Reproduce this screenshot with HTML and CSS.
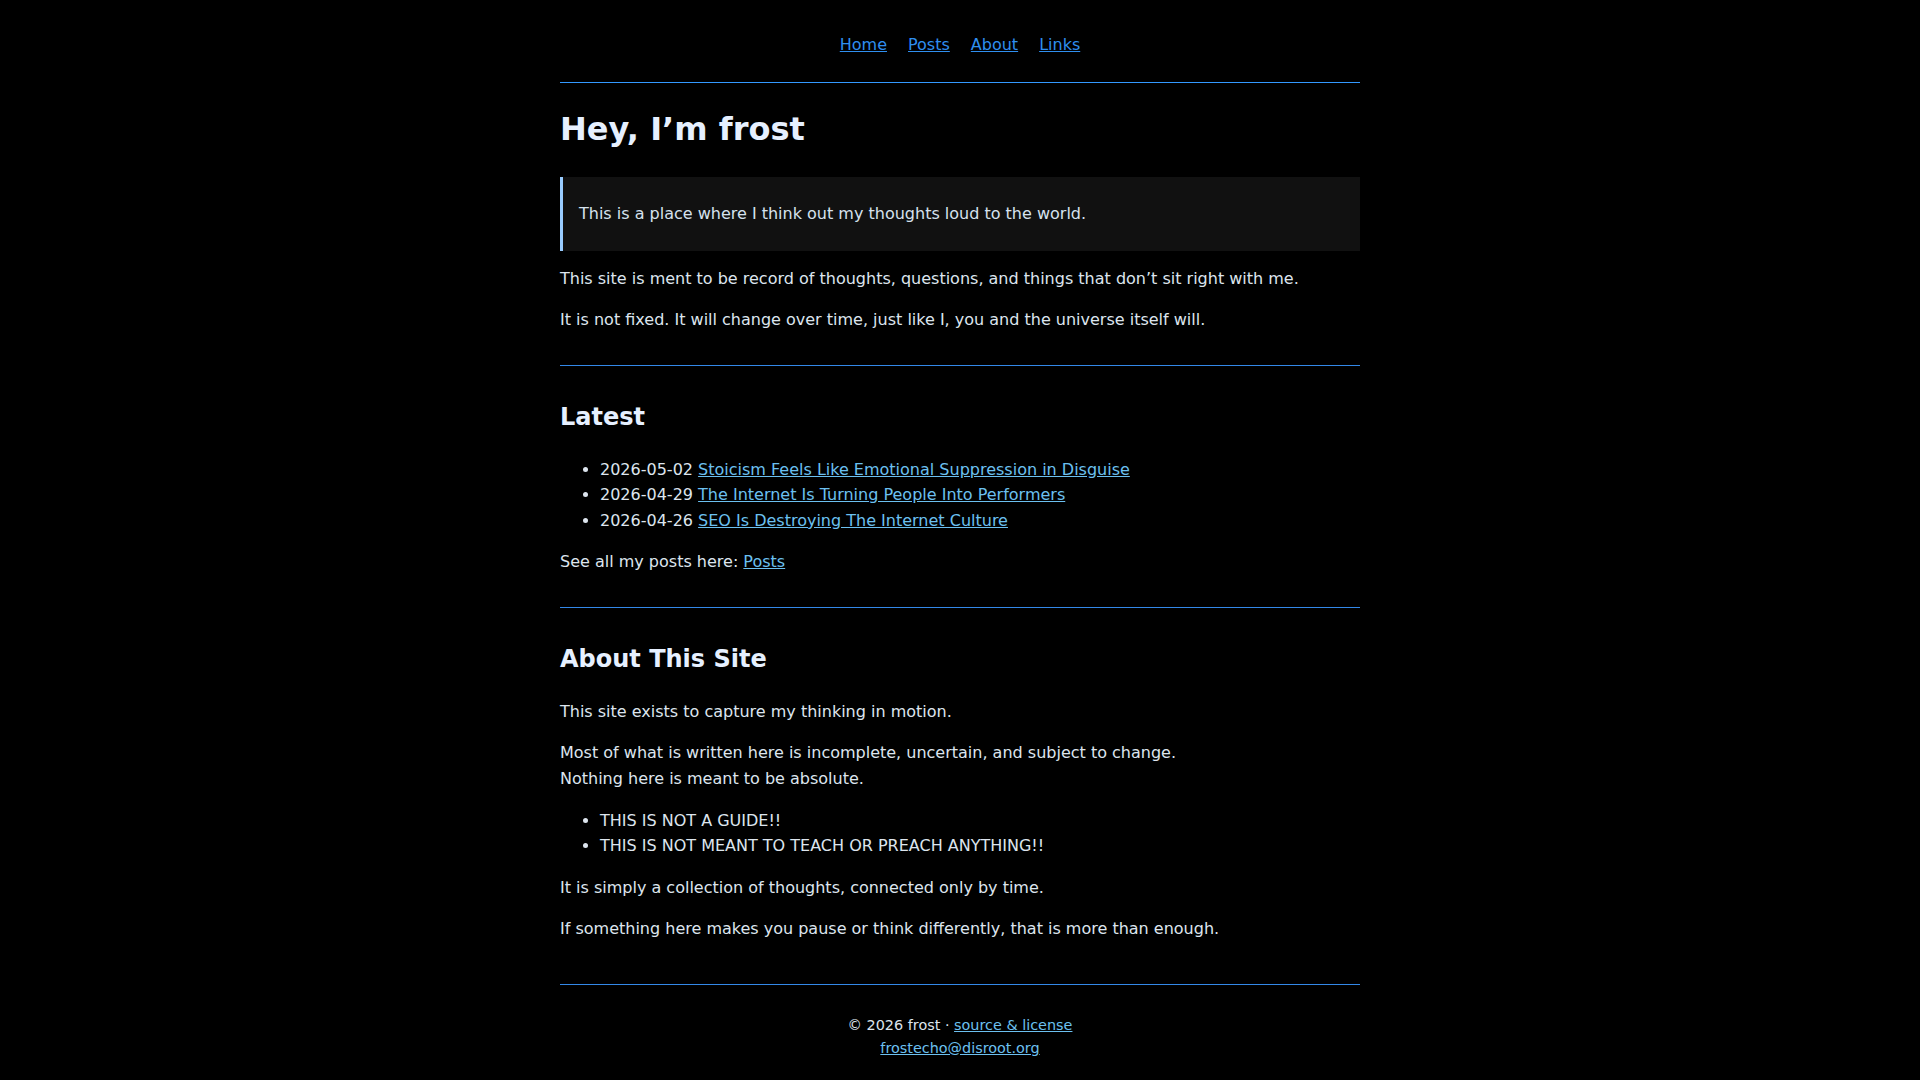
FILE: index.html
```html
<!DOCTYPE html>
<html lang="en">
<head>
<meta charset="utf-8">
<title>frost</title>
<link rel="stylesheet" href="styles.css">
</head>
<body>
<div class="page">
  <header class="site-header">
    <nav class="nav">
      <a href="#">Home</a>
      <a href="#">Posts</a>
      <a href="#">About</a>
      <a href="#">Links</a>
    </nav>
  </header>
  <main class="content">
    <h1 class="title">Hey, I’m frost</h1>
    <blockquote class="quote">
      <div class="quote-text">This is a place where I think out my thoughts loud to the world.</div>
    </blockquote>
    <p class="after-quote">This site is ment to be record of thoughts, questions, and things that don’t sit right with me.</p>
    <p>It is not fixed. It will change over time, just like I, you and the universe itself will.</p>
    <hr class="rule">
    <h2 class="section-title">Latest</h2>
    <ul class="list">
      <li>2026-05-02 <a href="#">Stoicism Feels Like Emotional Suppression in Disguise</a></li>
      <li>2026-04-29 <a href="#">The Internet Is Turning People Into Performers</a></li>
      <li>2026-04-26 <a href="#">SEO Is Destroying The Internet Culture</a></li>
    </ul>
    <p>See all my posts here: <a href="#">Posts</a></p>
    <hr class="rule">
    <h2 class="section-title">About This Site</h2>
    <p>This site exists to capture my thinking in motion.</p>
    <p>Most of what is written here is incomplete, uncertain, and subject to change.<br>Nothing here is meant to be absolute.</p>
    <ul class="list">
      <li>THIS IS NOT A GUIDE!!</li>
      <li>THIS IS NOT MEANT TO TEACH OR PREACH ANYTHING!!</li>
    </ul>
    <p>It is simply a collection of thoughts, connected only by time.</p>
    <p class="last">If something here makes you pause or think differently, that is more than enough.</p>
  </main>
  <footer class="site-footer">
    <div>© 2026 frost · <a href="#">source &amp; license</a></div>
    <div><a href="#">frostecho@disroot.org</a></div>
  </footer>
</div>
</body>
</html>
```

FILE: styles.css
```css
html, body {
  margin: 0;
  padding: 0;
  background: #000;
}

body {
  font-family: "DejaVu Sans", sans-serif;
  font-size: 16px;
  line-height: 1.6;
  color: #dde5ee;
}

.page {
  width: 800px;
  margin: 0 auto;
}

.site-header {
  padding: 32px 0 24px;
  border-bottom: 1px solid #3399ff;
}

.nav {
  display: flex;
  justify-content: center;
  gap: 21px;
}

.nav a {
  color: #2f8ff0;
}

.content a,
.site-footer a {
  color: #6cc0f0;
}

.title {
  font-size: 32px;
  line-height: 1.2;
  font-weight: bold;
  color: #e6f0ff;
  margin: 27px 0 29px;
}

.quote {
  margin: 0;
  padding: 24px 16px;
  background: #111;
  border-left: 3px solid #99ccff;
  color: #d6e2ee;
}

.content p {
  margin: 16px 0;
}

.content .after-quote {
  margin-top: 15px;
}

.rule {
  border: 0;
  border-top: 1px solid #3388e8;
  margin: 32px 0;
  height: 0;
}

.section-title {
  font-size: 24px;
  line-height: 1.2;
  font-weight: bold;
  color: #e6f0ff;
  margin: 37px 0 25px;
}

.list {
  margin: 16px 0;
  padding-left: 40px;
}

.content .last {
  margin-bottom: 42px;
}

.site-footer {
  border-top: 1px solid #3388e8;
  padding: 29px 0 20px;
  text-align: center;
  font-size: 14.4px;
  line-height: 1.6;
}
```
